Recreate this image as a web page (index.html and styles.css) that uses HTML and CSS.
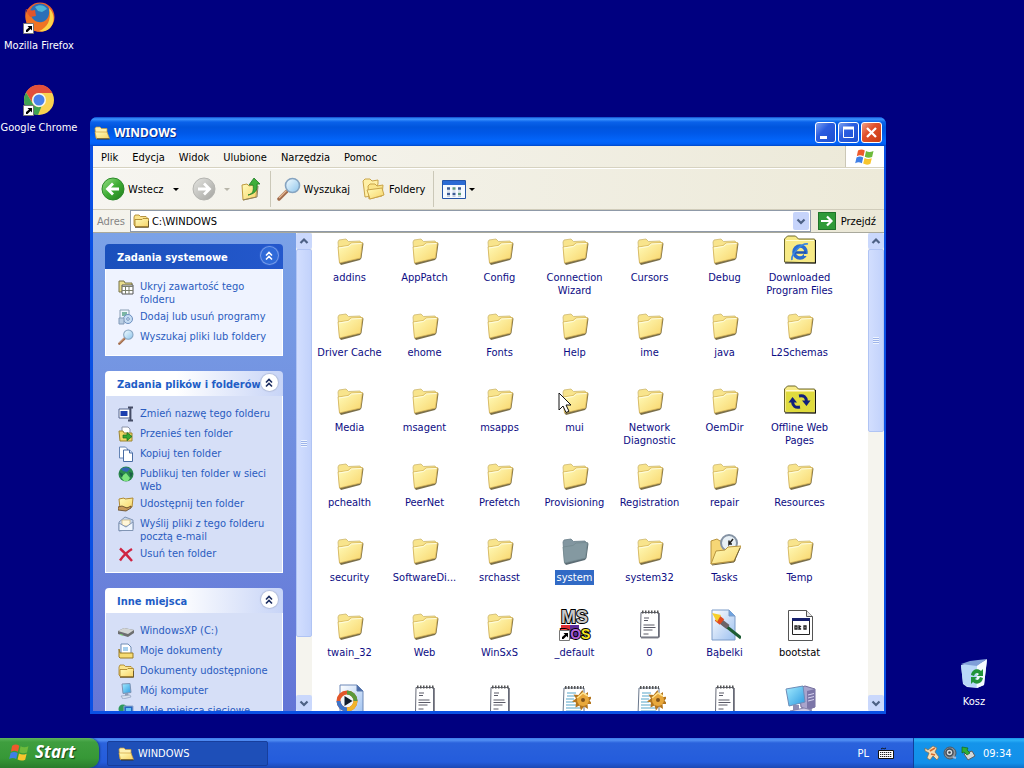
FILE: index.html
```html
<!DOCTYPE html>
<html lang="pl">
<head>
<meta charset="utf-8">
<title>WINDOWS</title>
<link rel="stylesheet" href="styles.css">
</head>
<body>
<svg class="sprite" aria-hidden="true">
  <defs>
    <linearGradient id="gFold" x1="0" y1="0" x2="1" y2="1"><stop offset="0" stop-color="#fffcbc"/><stop offset="1" stop-color="#f8d468"/></linearGradient>
    <linearGradient id="gGreen" x1="0" y1="0" x2="1" y2="1"><stop offset="0" stop-color="#9be08a"/><stop offset=".5" stop-color="#3fae35"/><stop offset="1" stop-color="#1f7a1c"/></linearGradient>
    <linearGradient id="gGrey" x1="0" y1="0" x2="1" y2="1"><stop offset="0" stop-color="#e4e4e0"/><stop offset="1" stop-color="#a4a4a0"/></linearGradient>
    <linearGradient id="gGlass" x1="0" y1="0" x2="1" y2="1"><stop offset="0" stop-color="#f4fcff"/><stop offset="1" stop-color="#8cc4ec"/></linearGradient>
    <linearGradient id="gPage" x1="0" y1="0" x2="1" y2="1"><stop offset="0" stop-color="#ffffff"/><stop offset="1" stop-color="#9cc0f0"/></linearGradient>
    <linearGradient id="gScreen" x1="0" y1="0" x2="1" y2="1"><stop offset="0" stop-color="#a4ecff"/><stop offset="1" stop-color="#2c9ae0"/></linearGradient>
  </defs>
  <symbol id="folder" viewBox="0 0 32 32">
    <path d="M5 28.500 7 31l19-5 1.500-2 2-14.500-2-1-2 15z" fill="#7a6f4a"/>
    <path d="M4 8l1-2 7-1 2.500 2.500L26 7l1.500 2L26 24 5.500 28z" fill="#f8e48c" stroke="#cdb870" stroke-width=".8"/>
    <path d="M4 13l10-1.500 3-2.500 11.500-.500-2 15.500L5.500 29z" fill="url(#gFold)" stroke="#d0ac50" stroke-width=".7"/>
    <path d="M5 14l9.500-1.500 3-2.500 10-.500" fill="none" stroke="#fffde0"/>
  </symbol>
  <symbol id="folder-dim" viewBox="0 0 32 32">
    <path d="M5 28.500 7 31l19-5 1.500-2 2-14.500-2-1-2 15z" fill="#5c6c74"/>
    <path d="M4 8l1-2 7-1 2.500 2.500L26 7l1.500 2L26 24 5.500 28z" fill="#8296a0" stroke="#677c88" stroke-width=".8"/>
    <path d="M4 13l10-1.500 3-2.500 11.500-.500-2 15.500L5.500 29z" fill="#8499a1" stroke="#73898f" stroke-width=".8"/>
  </symbol>
  <symbol id="folder-sm" viewBox="0 0 16 16">
    <path d="M1 4l1-2h4l1.500 1.500H13l1 1V13H2L1 12z" fill="#fbe48c" stroke="#a47c22" stroke-width=".8"/>
    <path d="M2 13.500V6.500h7l1-1h5.500V13.500z" fill="url(#gFold)" stroke="#a47c22" stroke-width=".8"/>
    <path d="M2 14.300h13.500V8" fill="none" stroke="#6d5a2a"/>
  </symbol>
  <symbol id="folder-open" viewBox="0 0 16 16">
    <path d="M1 3.500l1-1.500h4l1.500 1.500H13V13H2z" fill="#fdf0b0" stroke="#c49a3a" stroke-width=".7"/>
    <path d="M2.500 13.500 1 7h12l2.500 6.500z" fill="url(#gFold)" stroke="#d0a13a" stroke-width=".7"/>
    <path d="M3 14h12.500" stroke="#3c3620"/>
  </symbol>
  <symbol id="flat-folder" viewBox="0 0 32 32">
    <path d="M.5 28V5l3-3h8l3 3h16l1 2v22z" fill="#f7ea86" stroke="#6c672c"/>
    <path d="M2 6.500h28" stroke="#fffdd0"/>
    <path d="M1 29h30.500V6" fill="none" stroke="#111" stroke-width="1.200"/>
  </symbol>
  <symbol id="flag" viewBox="0 0 20 18">
    <path d="M3 2.500c2.500-1.500 4.500-1.500 6.800 0L8.500 8.300C6 7 4.200 7 1.800 8.200z" fill="#ee5a2c"/>
    <path d="M11 3c2.500 1.400 4.500 1.300 7.500 0l-1.400 6c-2.600 1-4.800 1-7.300-.3z" fill="#6dba3c"/>
    <path d="M1.500 9.400c2.400-1.200 4.300-1.200 6.700 0L6.900 15.200C4.500 14 2.700 14 .2 15.200z" fill="#3f7fe6"/>
    <path d="M9.500 10c2.500 1.300 4.600 1.300 7.300.2l-1.400 5.600c-2.500 1.200-4.700 1.100-7.200-.2z" fill="#f7c52d"/>
  </symbol>
  <symbol id="note" viewBox="0 0 32 32">
    <path d="M8 4h18v24l-2 1.500H7z" fill="#8a8a92"/>
    <path d="M7 3.500h17.500V28H6.500z" fill="#fff" stroke="#666a78"/>
    <path d="M8 3h17" stroke="#555" stroke-width="3" stroke-dasharray="1.500 1.500"/>
    <path d="M10 9h5M10 11.500h4M9.500 16h11M9.500 18.500h12M9.500 21h9M9.500 25h5" stroke="#5a5a66"/>
  </symbol>
  <symbol id="ini" viewBox="0 0 32 32">
    <path d="M5 4h20v27H4z" fill="#fff" stroke="#69778c"/>
    <path d="M6 3.500h19" stroke="#555" stroke-width="3" stroke-dasharray="1.500 1.500"/>
    <path d="M8 9h9M8 12h8M7 15h8M7 18h8M7 21h11M7 24h15M7 27h15" stroke="#8fc4dc" stroke-width="1.400"/>
    <path d="M23.500 6l1.500 5 4-3 0 5 5-.5-3.500 4 3 3.500-5 0 .5 5-4-2.500-3 4-1.500-5-4 2 .5-5-4-1 4-3-2.500-4 5 .5z" fill="#b4761f"/>
    <circle cx="24" cy="16" r="6" fill="#e8a83c"/>
    <path d="M18 14l6-5 5 3" stroke="#ffe28e" stroke-width="1.500" fill="none"/>
    <circle cx="24" cy="16" r="2" fill="#80521a"/>
  </symbol>
  <symbol id="shortcut" viewBox="0 0 11 11">
    <path d="M.5.500h10v10H.5z" fill="#fff" stroke="#777"/>
    <path d="M3 9V7l3-2.500L4.500 3H9v4.500L7.500 6 4.500 9z" fill="#000"/>
  </symbol>
  <symbol id="chev" viewBox="0 0 16 16">
    <path d="M5 7.500l3-3 3 3M5 11.500l3-3 3 3" fill="none" stroke="currentColor" stroke-width="1.600"/>
  </symbol>
  <symbol id="up" viewBox="0 0 16 16"><path d="M4.500 10 8 6.500l3.500 3.500" fill="none" stroke="#4d6185" stroke-width="2.200"/></symbol>
  <symbol id="down" viewBox="0 0 16 16"><path d="M4.500 6.500 8 10l3.500-3.500" fill="none" stroke="#4d6185" stroke-width="2.200"/></symbol>
  <symbol id="lens" viewBox="0 0 24 24">
    <path d="M10 14 2 22" stroke="#a06a4a" stroke-width="3.500" stroke-linecap="round"/>
    <path d="M9.500 13.500 2 21" stroke="#e4b894" stroke-width="1.200"/>
    <circle cx="15.500" cy="8.500" r="7" fill="url(#gGlass)" stroke="#86a4c0" stroke-width="1.600"/>
  </symbol>
</svg>

<main class="desktop">
  <a class="shortcut firefox" href="#">
    <svg viewBox="0 0 32 32"><circle cx="17" cy="15" r="14.500" fill="#e8622a"/><circle cx="17" cy="12" r="10.500" fill="#2b6fb8"/><path d="M12 5c4-3 10-2 12 2l-5 3-4-1z" fill="#4bb4d8"/><path d="M3 7c0 5 2 6 5 7 2 4 6 7 11 6 5-1 8-6 7-13 6 5 6 14 1 19C20 32 8 31 4 22 2 17 2 11 3 7z" fill="#ef7424"/><path d="M26 6c6 6 6 14 1 20-3 3-7 4-11 3 8-3 13-11 10-23z" fill="#fbd34a"/><path d="M3 7c3 1 6 2 9 1l1 6-6 1z" fill="#e2552a"/><use href="#shortcut" x="0" y="21" width="11" height="11"/></svg>
    <span>Mozilla Firefox</span>
  </a>
  <a class="shortcut chrome" href="#">
    <svg viewBox="0 0 32 32"><circle cx="16" cy="16" r="15" fill="#f9d350"/><path d="M3 8.500A15 15 0 0 1 29.500 9H16a7 7 0 0 0-6.500 10z" fill="#e2503c"/><path d="M3 8.500 10 20a7 7 0 0 0 8.500 2.500L15 31A15 15 0 0 1 3 8.500z" fill="#3fa352"/><circle cx="16" cy="16" r="7" fill="#f5f7f4"/><circle cx="16" cy="16" r="5.500" fill="#4a82ea"/><use href="#shortcut" x="0" y="21" width="11" height="11"/></svg>
    <span>Google Chrome</span>
  </a>
  <a class="shortcut bin" href="#">
    <svg viewBox="0 0 32 32"><path d="M3 7 14 4l6 2 9-4-3 25-7 3-10-1-4-3z" fill="#cfe3f8"/><path d="M3 7l11-1 5 2-1 21-9-1-4-3z" fill="#b9d8f8"/><path d="M3 6 12 3l8-1 9-1-10 7z" fill="#7f9fd8"/><path d="M19 8 29 1l-3 26-7 3z" fill="#f3faff"/><path d="M13 17c1-6 7-7 10-4l2-2v7h-6l2-2c-2-2-4-1-5 2zM25 20c-1 6-7 7-10 4l-2 2v-7h6l-2 2c2 2 4 1 5-2z" fill="#23943a"/></svg>
    <span>Kosz</span>
  </a>

  <section class="window" aria-label="WINDOWS">
    <header class="titlebar">
      <svg class="i16"><use href="#folder-open"/></svg>
      <h1>WINDOWS</h1>
      <button class="wbtn" aria-label="Minimalizuj"><svg viewBox="0 0 19 19"><path d="M4 13h7v3H4z" fill="#fff"/></svg></button>
      <button class="wbtn" aria-label="Maksymalizuj"><svg viewBox="0 0 19 19"><path d="M4.500 5v9.500h10V5z" fill="none" stroke="#fff"/><path d="M4 5h11" stroke="#fff" stroke-width="3"/></svg></button>
      <button class="wbtn close" aria-label="Zamknij"><svg viewBox="0 0 19 19"><path d="M5 5l9 9M14 5l-9 9" stroke="#fff" stroke-width="2.300"/></svg></button>
    </header>
    <div class="frame">
      <div class="menurow">
        <nav class="menu"><button>Plik</button><button>Edycja</button><button>Widok</button><button>Ulubione</button><button>Narzędzia</button><button>Pomoc</button></nav>
        <div class="brand"><svg viewBox="0 0 20 18"><use href="#flag"/></svg></div>
      </div>
      <div class="toolbar">
        <button class="back"><svg class="i24" viewBox="0 0 24 24"><circle cx="12" cy="12" r="11" fill="url(#gGreen)" stroke="#2c8a2a"/><path d="M18 12H7M12 6.500 6.500 12l5.500 5.500" fill="none" stroke="#fff" stroke-width="2.800"/></svg>Wstecz</button>
        <button class="drop" aria-label="Historia wstecz"><i class="tri"></i></button>
        <button class="fwd" aria-label="Dalej"><svg class="i24" viewBox="0 0 24 24"><circle cx="12" cy="12" r="11" fill="url(#gGrey)" stroke="#b4b4b0"/><path d="M6 12h11M12 6.500l5.500 5.500-5.500 5.500" fill="none" stroke="#fff" stroke-width="2.800"/></svg></button>
        <button class="drop" aria-label="Historia dalej"><i class="tri off"></i></button>
        <button class="upbtn" aria-label="W górę"><svg class="i24" viewBox="0 0 24 24"><path d="M4 8l5-1 2 2 8-2-1 13-13 3z" fill="url(#gFold)" stroke="#bf9a3e"/><path d="M5 23l14-3 1-11" fill="none" stroke="#8e8060"/><path d="M10 18c5-1 6-5 5-10h-4l5-7 6 6h-3c1 7-3 10-9 11z" fill="#3fae3a" stroke="#1e7d24" stroke-width=".8"/></svg></button>
        <span class="sep"></span>
        <button class="search"><svg class="i24"><use href="#lens"/></svg>Wyszukaj</button>
        <button class="folders"><svg class="i24" viewBox="0 0 24 24"><path d="M1 4l2-2h5l2 2 6-1v4l-6 12-7 1z" fill="#fff0a6" stroke="#c9a449"/><path d="M6 9l2-2h5l2 2 6-1-1 11-13 3z" fill="#fbe589" stroke="#c9a449"/><path d="M5 13l15-2 2 7-14 4z" fill="url(#gFold)" stroke="#c9a449"/></svg>Foldery</button>
        <span class="sep"></span>
        <button class="views" aria-label="Widoki"><svg class="i24" viewBox="0 0 24 24"><path d="M.5 3.500h23v18H.5z" fill="#f6faff" stroke="#2454a8"/><path d="M1 4h22v4H1z" fill="#2b6bd4"/><path d="M5 11.500h3M16 11.500h3M5 17h3M10.500 17h3" stroke="#3c5c96" stroke-width="2.500"/><path d="M10.500 11.500h3M16 17h3" stroke="#5c9a7c" stroke-width="2.500"/><path d="M5 14h3M16 14h3M10.500 14h3M5 19.500h3M16 19.500h3M10.500 19.500h3" stroke="#c4ccd8"/></svg><i class="tri"></i></button>
      </div>
      <div class="address">
        <label for="path">Adres</label>
        <div class="field"><svg class="i16"><use href="#folder-sm"/></svg><input id="path" type="text" value="C:\WINDOWS" spellcheck="false"><button class="arrow" aria-label="Rozwiń"><svg class="i16"><use href="#down"/></svg></button></div>
        <button class="go"><svg viewBox="0 0 18 18"><path d="M0 0h18v18H0z" fill="#2f9a38"/><path d="M.5.500h17v17H.5z" fill="none" stroke="#1f7228"/><path d="M3 9h10M9 4.500 13.500 9 9 13.500" fill="none" stroke="#fff" stroke-width="2.200"/></svg>Przejdź</button>
      </div>

      <div class="content">
        <aside class="side">
          <section class="panel primary">
            <h2>Zadania systemowe<button aria-label="Zwiń"><svg class="i16"><use href="#chev"/></svg></button></h2>
            <nav>
              <a href="#"><svg class="i16" viewBox="0 0 16 16"><path d="M1 13V2h5l1 2h7v9z" fill="#e9dc8c" stroke="#777348"/><path d="M4 6h11v9H4z" fill="#fff" stroke="#555"/><path d="M4 7.500h11M7.500 8v7M11 8v7M4 11.500h11" stroke="#7a7f6c"/></svg><span>Ukryj zawartość tego folderu</span></a>
              <a href="#"><svg class="i16" viewBox="0 0 16 16"><path d="M2 1h9v11H2z" fill="#eef6fc" stroke="#8a9fb4"/><path d="M4 3h5v4H4z" fill="#7cb6a4"/><circle cx="10" cy="10" r="4.500" fill="#c7ddf3" stroke="#6c8fc0"/><circle cx="10" cy="10" r="1.300" fill="#fff" stroke="#6c8fc0"/><path d="M1 9h5v6H1z" fill="#b8cce2" stroke="#8199b8"/></svg><span>Dodaj lub usuń programy</span></a>
              <a href="#"><svg class="i16"><use href="#lens"/></svg><span>Wyszukaj pliki lub foldery</span></a>
            </nav>
          </section>
          <section class="panel">
            <h2>Zadania plików i folderów<button aria-label="Zwiń"><svg class="i16"><use href="#chev"/></svg></button></h2>
            <nav>
              <a href="#"><svg class="i16" viewBox="0 0 16 16"><path d="M1 3h11v9H1z" fill="#fff" stroke="#55648c"/><path d="M2.500 5h7v5h-7z" fill="#1c3fae"/><path d="M10 1.500h5M12.500 1.500v13M10 14.500h5" stroke="#444c66" stroke-width="1.800" fill="none"/></svg><span>Zmień nazwę tego folderu</span></a>
              <a href="#"><svg class="i16" viewBox="0 0 16 16"><path d="M4 1h6l2 2v6H4z" fill="#fff" stroke="#8b93a8"/><path d="M1 5h4l1 2h8v8H2z" fill="#f1d765" stroke="#9c8432"/><path d="M5 9h4V6.500l5 4-5 4.200V12H5z" fill="#36a532" stroke="#176a1b" stroke-width=".7"/></svg><span>Przenieś ten folder</span></a>
              <a href="#"><svg class="i16" viewBox="0 0 16 16"><path d="M1.500 1h6l2 2v9h-8z" fill="#fff" stroke="#6484b4"/><path d="M5.500 4h6l3 3v8.500h-9z" fill="#fff" stroke="#4a6da4"/><path d="M11.500 4v3h3" fill="#cfe0f8" stroke="#4a6da4"/></svg><span>Kopiuj ten folder</span></a>
              <a href="#"><svg class="i16" viewBox="0 0 16 16"><circle cx="8" cy="8" r="7.500" fill="#2a8a4c"/><path d="M3 3c3-2 7-2 9 0L9 6 5 5z" fill="#3264b4"/><path d="M8 7l4 5-2 3H6l-3-4z" fill="#7ce27c"/><path d="M1 6l4 2-1 4zM11 6l4 1-2 5z" fill="#1c5f46"/></svg><span>Publikuj ten folder w sieci Web</span></a>
              <a href="#"><svg class="i16" viewBox="0 0 16 16"><path d="M1 3l5-1 1 1 8-1-1 9-12 2z" fill="url(#gFold)" stroke="#b08a34"/><path d="M0 11l4-1 5 2 4-2v2l-5 3-8-1z" fill="#c99a5c" stroke="#5d4524" stroke-width=".8"/></svg><span>Udostępnij ten folder</span></a>
              <a href="#"><svg class="i16" viewBox="0 0 16 16"><path d="M1 6l6-5 8 3v9l-14 2z" fill="#c6d6ee" stroke="#8195b4"/><path d="M4 4h8v6H4z" fill="#fff6d8" stroke="#c0ac7a" stroke-width=".7"/><path d="M1 7l7 4 7-5v8.500H1z" fill="#eff5fd" stroke="#8195b4"/></svg><span>Wyślij pliki z tego folderu pocztą e-mail</span></a>
              <a href="#"><svg class="i16" viewBox="0 0 16 16"><path d="M2 2.500C6 6 10 10 14 15M14 3C9 6 5 10 2 14.500" stroke="#cf2442" stroke-width="2.400" fill="none"/></svg><span>Usuń ten folder</span></a>
            </nav>
          </section>
          <section class="panel">
            <h2>Inne miejsca<button aria-label="Zwiń"><svg class="i16"><use href="#chev"/></svg></button></h2>
            <nav>
              <a href="#"><svg class="i16" viewBox="0 0 16 16"><path d="M0 8l6-3 10 2v3l-6 4L0 11z" fill="#6d6f70"/><path d="M0 8l6-3 10 2-6 4z" fill="#d3d5d4"/><path d="M2 11.500l3 .8" stroke="#7fe07a"/></svg><span>WindowsXP (C:)</span></a>
              <a href="#"><svg class="i16" viewBox="0 0 16 16"><path d="M3 1h7l3 3v8H3z" fill="#fff" stroke="#6f8cb4"/><path d="M5 4h5v4H5z" fill="#a6d0ee"/><path d="M1 6l1 4h13v5H2L1 14z" fill="#f6dc74" stroke="#9a7a24"/></svg><span>Moje dokumenty</span></a>
              <a href="#"><svg class="i16"><use href="#folder-sm"/></svg><span>Dokumenty udostępnione</span></a>
              <a href="#"><svg class="i16" viewBox="0 0 16 16"><path d="M4 1l8-.5 1 9-8 1z" fill="url(#gScreen)" stroke="#7d93b4"/><path d="M7 10h3l1 3H7z" fill="#8d9db8"/><path d="M3 13l9-1 1 2-8 2z" fill="#d6dfee" stroke="#8596b4" stroke-width=".6"/></svg><span>Mój komputer</span></a>
              <a href="#"><svg class="i16" viewBox="0 0 16 16"><circle cx="5" cy="6" r="4.500" fill="#2e9a5c"/><path d="M6 3h9v8H6z" fill="#2466c4" stroke="#8fa6cc"/><path d="M8 5h5v3H8z" fill="#66c4f4"/></svg><span>Moje miejsca sieciowe</span></a>
            </nav>
          </section>
        </aside>
        <div class="scroll side-scroll"><button aria-label="W górę"><svg class="i16"><use href="#up"/></svg></button><div class="track"><div class="thumb"><i></i></div></div><button aria-label="W dół"><svg class="i16"><use href="#down"/></svg></button></div>

        <div class="files">
          <a href="#"><svg><use href="#folder"/></svg><span>addins</span></a>
          <a href="#"><svg><use href="#folder"/></svg><span>AppPatch</span></a>
          <a href="#"><svg><use href="#folder"/></svg><span>Config</span></a>
          <a href="#"><svg><use href="#folder"/></svg><span>Connection Wizard</span></a>
          <a href="#"><svg><use href="#folder"/></svg><span>Cursors</span></a>
          <a href="#"><svg><use href="#folder"/></svg><span>Debug</span></a>
          <a href="#"><svg viewBox="0 0 32 32"><use href="#flat-folder"/><circle cx="16" cy="18" r="6" fill="none" stroke="#2a6cd0" stroke-width="3.500"/><path d="M10 18.500h12" stroke="#1f56b4" stroke-width="2.500"/><path d="M20 20h4v2h-4z" fill="#f7ea86"/><path d="M8 26c-1-6 9-17 16-16" fill="none" stroke="#3a86e0" stroke-width="1.700"/></svg><span>Downloaded Program Files</span></a>

          <a href="#"><svg><use href="#folder"/></svg><span>Driver Cache</span></a>
          <a href="#"><svg><use href="#folder"/></svg><span>ehome</span></a>
          <a href="#"><svg><use href="#folder"/></svg><span>Fonts</span></a>
          <a href="#"><svg><use href="#folder"/></svg><span>Help</span></a>
          <a href="#"><svg><use href="#folder"/></svg><span>ime</span></a>
          <a href="#"><svg><use href="#folder"/></svg><span>java</span></a>
          <a href="#"><svg><use href="#folder"/></svg><span>L2Schemas</span></a>

          <a href="#"><svg><use href="#folder"/></svg><span>Media</span></a>
          <a href="#"><svg><use href="#folder"/></svg><span>msagent</span></a>
          <a href="#"><svg><use href="#folder"/></svg><span>msapps</span></a>
          <a href="#"><svg><use href="#folder"/></svg><span>mui</span></a>
          <a href="#"><svg><use href="#folder"/></svg><span>Network Diagnostic</span></a>
          <a href="#"><svg><use href="#folder"/></svg><span>OemDir</span></a>
          <a href="#"><svg viewBox="0 0 32 32"><use href="#flat-folder"/><path d="M2 8h28.500v20H2z" fill="#dfdb3e"/><path d="M15 12c5-1 7 1 7.500 5M16 23c-5 1-7-1-7.500-5" fill="none" stroke="#10207c" stroke-width="3"/><path d="M18 16.500h8.500L22.500 22zM13 18.500H4.500L8.500 13z" fill="#10207c"/></svg><span>Offline Web Pages</span></a>

          <a href="#"><svg><use href="#folder"/></svg><span>pchealth</span></a>
          <a href="#"><svg><use href="#folder"/></svg><span>PeerNet</span></a>
          <a href="#"><svg><use href="#folder"/></svg><span>Prefetch</span></a>
          <a href="#"><svg><use href="#folder"/></svg><span>Provisioning</span></a>
          <a href="#"><svg><use href="#folder"/></svg><span>Registration</span></a>
          <a href="#"><svg><use href="#folder"/></svg><span>repair</span></a>
          <a href="#"><svg><use href="#folder"/></svg><span>Resources</span></a>

          <a href="#"><svg><use href="#folder"/></svg><span>security</span></a>
          <a href="#"><svg><use href="#folder"/></svg><span>SoftwareDi...</span></a>
          <a href="#"><svg><use href="#folder"/></svg><span>srchasst</span></a>
          <a href="#" class="selected"><svg><use href="#folder-dim"/></svg><span>system</span></a>
          <a href="#"><svg><use href="#folder"/></svg><span>system32</span></a>
          <a href="#"><svg viewBox="0 0 32 32"><path d="M2 30V7l6-2 3 2h15v20z" fill="#f6d676" stroke="#b8943e"/><circle cx="20" cy="9" r="8" fill="#e8f0f6" stroke="#8593a4" stroke-width="2"/><path d="M24 5l-4 5v-3.500M20 10h3" stroke="#222" stroke-width="1.500" fill="none"/><path d="M2 30 7 17l9-1 3-3 13-1-7 15z" fill="url(#gFold)" stroke="#b8943e"/><path d="M3 31l22-3 6-14" fill="none" stroke="#6f6440"/></svg><span>Tasks</span></a>
          <a href="#"><svg><use href="#folder"/></svg><span>Temp</span></a>

          <a href="#"><svg><use href="#folder"/></svg><span>twain_32</span></a>
          <a href="#"><svg><use href="#folder"/></svg><span>Web</span></a>
          <a href="#"><svg><use href="#folder"/></svg><span>WinSxS</span></a>
          <a href="#"><svg viewBox="0 0 32 32" class="dos"><text class="dos-top" x="2" y="14" fill="#c8c8c8">MS</text><path d="M2 16h10v14H2z" fill="#e02c34"/><path d="M11 16h9v14h-9z" fill="#5c2c9c"/><text class="dos-low" x="1" y="30"><tspan fill="#f04848">D</tspan><tspan fill="#b060d8">O</tspan><tspan fill="#f8e824">S</tspan></text><use href="#shortcut" x="0" y="21" width="11" height="11"/></svg><span>_default</span></a>
          <a href="#"><svg><use href="#note"/></svg><span>0</span></a>
          <a href="#"><svg viewBox="0 0 32 32"><path d="M3 1h17l6 6v24H3z" fill="url(#gPage)" stroke="#7c9cc8"/><path d="M20 1v6h6" fill="#6fa3e0" stroke="#7c9cc8"/><path d="M13 14l19 15" stroke="#1d5c34" stroke-width="3"/><path d="M10 11l9 7" stroke="#6c6468" stroke-width="5"/><path d="M8 9l5 4" stroke="#e04a20" stroke-width="7"/><path d="M3 4l9 2-4 7z" fill="#f7cf2c"/></svg><span>Bąbelki</span></a>
          <a href="#" class="plain"><svg viewBox="0 0 32 32"><path d="M4.500 1.500h18l6 6v24h-24z" fill="#fff" stroke="#555"/><path d="M22.500 1.500v6h6" fill="#e8e8e8" stroke="#555"/><path d="M8.500 9.500h17v16h-17z" fill="#fff" stroke="#222"/><path d="M8 10.500h18" stroke="#16206c" stroke-width="3"/><path d="M11 17h2v3h-2zM15 16v5M17 17l-2 1.500 2 2M20 17h2v3h-2z" fill="none" stroke="#222" stroke-width="1.300"/></svg><span>bootstat</span></a>

          <a href="#" aria-label="Plik multimedialny"><svg viewBox="0 0 32 32"><path d="M6 1h17l6 6v25H6z" fill="url(#gPage)" stroke="#6d88b8"/><path d="M23 1v6h6" fill="#4b6ca8" stroke="#5a78ac"/><circle cx="13" cy="17" r="8.500" fill="#f2f6f8" stroke="#e2562a" stroke-width="4"/><path d="M13 8.500A8.500 8.500 0 0 1 21.500 17" fill="none" stroke="#5a9a3c" stroke-width="4"/><path d="M21.500 17A8.500 8.500 0 0 1 13 25.500" fill="none" stroke="#f0b42c" stroke-width="4"/><path d="M13 25.500A8.500 8.500 0 0 1 4.500 17" fill="none" stroke="#3c74c8" stroke-width="4"/><path d="M10.500 12l8 5-8 5z" fill="#111c2c"/></svg></a>
          <a href="#" aria-label="Plik tekstowy"><svg><use href="#note"/></svg></a>
          <a href="#" aria-label="Plik tekstowy"><svg><use href="#note"/></svg></a>
          <a href="#" aria-label="Plik konfiguracji"><svg><use href="#ini"/></svg></a>
          <a href="#" aria-label="Plik konfiguracji"><svg><use href="#ini"/></svg></a>
          <a href="#" aria-label="Plik tekstowy"><svg><use href="#note"/></svg></a>
          <a href="#" aria-label="Program"><svg viewBox="0 0 32 32"><path d="M15 4l6-2 10 3v18l-8 3-6-3z" fill="#a9a4cc" stroke="#746e9c"/><path d="M23 7l8-2v18l-8 3z" fill="#7c76a8"/><path d="M24 11l6-1.500M24 14l6-1.500M24 17l6-1.500" stroke="#d8d4f0"/><path d="M2 5l17-3 2 16-16 4z" fill="url(#gScreen)" stroke="#6d8cb8"/><path d="M9 21h6v6H9z" fill="#8d8cb4"/><path d="M6 27l14-3 8 2-12 5z" fill="#cfcce6" stroke="#8784ac"/></svg></a>
        </div>
        <div class="scroll main-scroll"><button aria-label="W górę"><svg class="i16"><use href="#up"/></svg></button><div class="track"><div class="thumb"><i></i></div></div><button aria-label="W dół"><svg class="i16"><use href="#down"/></svg></button></div>
      </div>
    </div>
  </section>
  <svg class="pointer" viewBox="0 0 14 22" aria-hidden="true"><path d="M1 1v17l4-4 3 6.500 3-1.300L8 13h5z" fill="#fff" stroke="#111"/></svg>
</main>

<footer class="taskbar">
  <button class="start"><svg viewBox="0 0 20 18"><use href="#flag"/></svg>Start</button>
  <button class="task"><svg class="i16"><use href="#folder-open"/></svg>WINDOWS</button>
  <div class="lang"><span>PL</span><svg class="i16" viewBox="0 0 16 16"><path d="M3 4c2-2 3 1 5-1" stroke="#111" fill="none"/><path d="M.5 5.500h15v8H.5z" fill="#fff" stroke="#111"/><path d="M2 7.500h12M2 9.500h12M2 11.500h12" stroke="#222" stroke-width="1.200" stroke-dasharray="1.300 .7"/></svg></div>
  <div class="tray">
    <svg class="i16" viewBox="0 0 16 16"><path d="M1 3l3 2 5-4 4 2-2 4 4 5-2 3-4-4-3 4-3-2 2-5-4-2z" fill="#f4dcb4" stroke="#7a6a50" stroke-width=".7"/><path d="M6 6l5-3M7 9l4 1" stroke="#d66a2a" stroke-width="1.600"/></svg>
    <svg class="i16" viewBox="0 0 16 16"><circle cx="8" cy="8" r="6" fill="#8c949a" stroke="#4c5864"/><circle cx="7.500" cy="7.500" r="3.500" fill="#d8dee2" stroke="#424d58" stroke-width="1.500"/><circle cx="7.500" cy="7.500" r="1.300" fill="#384048"/><path d="M11 12l3 1" stroke="#a0b8d8" stroke-width="2"/></svg>
    <svg class="i16" viewBox="0 0 16 16"><path d="M4 9l8-3 3 5-7 4z" fill="#d2d8da" stroke="#596066"/><path d="M2 2l6 1-1 2 3 3-3 2-3-3-2 1z" fill="#2fae34" stroke="#14651c" stroke-width=".7"/></svg>
    <time>09:34</time>
  </div>
</footer>
</body>
</html>
```
FILE: styles.css
```css
* { box-sizing: border-box; }
body {
  margin: 0;
  height: 100vh;
  display: flex;
  flex-direction: column;
  overflow: hidden;
  font: 11px/13px "DejaVu Sans Condensed", "Noto Sans", sans-serif;
  color: #000;
}
button {
  font: inherit;
  color: inherit;
  border: 0;
  padding: 0;
  margin: 0;
  background: none;
  display: flex;
  align-items: center;
}
a { color: inherit; text-decoration: none; }
svg { display: block; flex: none; }
.sprite { position: absolute; width: 0; height: 0; }
.i16 { width: 16px; height: 16px; }
.i24 { width: 24px; height: 24px; }

/* Desktop */
.desktop { flex: 1; position: relative; background: #000080; min-height: 0; }
.shortcut {
  position: absolute;
  width: 78px;
  display: flex;
  flex-direction: column;
  align-items: center;
  gap: 5px;
  color: #fff;
  white-space: nowrap;
}
.shortcut svg { width: 32px; height: 32px; }
.firefox { left: 0; top: 2px; }
.chrome { left: 0; top: 84px; }
.bin { right: 11px; bottom: 30px; }
.pointer { position: absolute; left: 558px; top: 392px; width: 14px; height: 22px; }

/* Window */
.window {
  position: absolute;
  inset: 117px 138px 24px 90px;
  display: flex;
  flex-direction: column;
  background: #0a50e4;
  border-radius: 7px 7px 0 0;
  overflow: hidden;
}
.titlebar {
  height: 29px;
  padding: 2px 4px 0;
  display: flex;
  align-items: center;
  gap: 2px;
  background: linear-gradient(#0a46c8 0, #3d95ff 2px, #0a62ea 5px, #0055dd 10px, #0058e8 16px, #0366fc 24px, #0260f4 27px, #0048c8 29px);
}
.titlebar h1 {
  flex: 1;
  margin: 0 0 0 2px;
  font: bold 12px/16px "Noto Sans", sans-serif;
  color: #fff;
  text-shadow: 1px 1px #0a2c88;
}
.wbtn {
  width: 21px;
  height: 21px;
  border: 1px solid #fff;
  border-radius: 3px;
  background: linear-gradient(135deg, #7ba0f0, #2b5de0 40%, #1d4fd0);
}
.wbtn svg { width: 19px; height: 19px; }
.close { background: linear-gradient(135deg, #f0a088, #e0502c 40%, #c83c14); }
.frame {
  flex: 1;
  min-height: 0;
  margin: 0 2px 3px 3px;
  display: flex;
  flex-direction: column;
  background: #eeebdc;
}

/* Bars */
.menurow { display: flex; height: 22px; background: linear-gradient(90deg, #f8f7f3, #ece9d8); border-bottom: 1px solid #d6d2c0; }
.menu { flex: 1; display: flex; padding: 1px 0 0 8px; gap: 14px; }
.brand { width: 39px; background: #fff; border-left: 1px solid #cbc7b6; display: grid; place-items: center; }
.brand svg { width: 20px; height: 18px; }
.toolbar {
  height: 42px;
  display: flex;
  align-items: center;
  padding-left: 8px;
  border-top: 1px solid #fff;
  border-bottom: 1px solid #d0ccba;
  background: linear-gradient(90deg, #f6f5f0, #edead9);
}
.toolbar button { gap: 3px; }
.toolbar .drop { width: 28px; padding-left: 9px; }
.tri { border: 3px solid transparent; border-top-color: #000; border-bottom: 0; }
.off { border-top-color: #b8b6aa; }
.toolbar .fwd + .drop { width: 22px; padding-left: 8px; }
.sep { width: 1px; height: 36px; background: #cbc8b8; margin: 0 6px 0 8px; }
.search { margin-right: 12px; }
.views { padding-left: 2px; }
.address { height: 22px; display: flex; align-items: stretch; background: linear-gradient(90deg, #f4f3ec, #ebe8d7); }
.address label { padding: 5px 5px 0 4px; color: #858585; }
.field { flex: 1; display: flex; align-items: center; gap: 3px; padding: 0 1px 0 2px; background: #fff; border: 1px solid #8f9aa8; }
.field input { flex: 1; min-width: 0; border: 0; padding: 0; background: none; font: inherit; outline: 0; }
.arrow { height: 18px; background: #c6d4fb; border-radius: 2px; }
.go { padding: 0 8px 0 7px; gap: 5px; }
.go svg { width: 18px; height: 18px; }

/* Content */
.content { flex: 1; min-height: 0; display: flex; background: #fff; border-top: 1px solid #a9a99c; }
.side {
  width: 203px;
  padding: 11px 13px 0 12px;
  overflow: hidden;
  display: flex;
  flex-direction: column;
  gap: 15px;
  background: linear-gradient(#7ba2e7, #6375d6);
}
.panel { flex: none; }
.panel h2 {
  margin: 0;
  height: 25px;
  padding: 2px 5px 0 12px;
  display: flex;
  align-items: center;
  justify-content: space-between;
  white-space: nowrap;
  border-radius: 4px 4px 0 0;
  font: bold 11px/13px "DejaVu Sans Condensed", "Noto Sans", sans-serif;
  color: #215dc6;
  background: linear-gradient(90deg, #fff 40%, #c7d4f7);
}
.panel h2 button {
  flex: none;
  width: 17px;
  height: 17px;
  margin: -4px 0 0 -8px;
  border-radius: 9px;
  background: #fff;
  color: #1a2c60;
  box-shadow: 0 0 1px 1px #b4bfdc;
}
.panel nav {
  display: flex;
  flex-direction: column;
  gap: 4px;
  padding: 10px 12px 10px;
  border: solid #fff;
  border-width: 0 1px 1px;
  background: #d6dff7;
  color: #2a5cc0;
}
.panel nav a { display: flex; gap: 6px; min-height: 16px; margin-right: -8px; }
.panel nav span { padding-top: 1px; margin-bottom: -1px; max-width: 130px; }
.primary h2 { background: linear-gradient(90deg, #1a50bc, #2458cc); color: #fff; }
.primary h2 button { background: #2f6ad8; color: #fff; box-shadow: 0 0 1px 1px #7fa4ee; }
.primary nav { background: #eff3ff; }

.scroll { width: 16px; display: flex; flex-direction: column; background: #f5f4ee; }
.scroll button { height: 16px; background: #cad8fc; border-radius: 2px; }
.track { flex: 1; }
.thumb {
  display: grid;
  place-items: center;
  border: 1px solid #b0c4f4;
  border-radius: 2px;
  background: linear-gradient(90deg, #d2defe, #c2d2fb);
}
.thumb i { width: 6px; height: 7px; background: repeating-linear-gradient(#eef4fe 0 1px, #9db4ea 1px 2px); }
.side-scroll .thumb { height: 87%; }
.main-scroll .thumb { height: 41%; }

.files {
  flex: 1;
  min-width: 0;
  overflow: hidden;
  display: grid;
  grid-template-columns: repeat(auto-fill, 75px);
  grid-auto-rows: 75px;
  padding-top: 1px;
  color: #0c0c84;
}
.files a { display: flex; flex-direction: column; align-items: center; gap: 4px; text-align: center; }
.files svg { width: 32px; height: 32px; }
.files span { padding: 1px 2px; }
.files .plain { color: #000; }
.files .selected span { background: #316ac5; color: #fff; }
.files .dos { overflow: visible; }
.dos text { font: bold 18px/20px "Liberation Sans", sans-serif; stroke: #000; stroke-width: 2px; paint-order: stroke; }
.dos .dos-low { font-size: 14px; }

/* Taskbar */
.taskbar {
  height: 30px;
  display: flex;
  align-items: stretch;
  color: #fff;
  background: linear-gradient(#3c7cec 0, #5390f4 2px, #2a62dc 5px, #245cdc 24px, #1c48b4 30px);
}
.start {
  width: 99px;
  padding: 0 0 2px 9px;
  gap: 5px;
  border-radius: 0 10px 10px 0;
  font: italic bold 17px/20px "Open Sans", sans-serif;
  text-shadow: 1px 1px 1px #14481a;
  background: linear-gradient(#5cb45c 0, #3f9e3f 4px, #379837 20px, #2a7c2c 30px);
  box-shadow: 1px 0 2px #163c8c;
}
.start svg { width: 21px; height: 19px; }
.task {
  width: 161px;
  margin: 3px auto 2px 8px;
  padding-left: 10px;
  gap: 4px;
  border: 1px solid #173e9c;
  border-radius: 2px;
  background: #1e4fb8;
}
.lang { display: flex; align-items: center; gap: 9px; padding-right: 19px; }
.tray {
  width: 111px;
  display: flex;
  align-items: center;
  gap: 2px;
  padding-left: 10px;
  border-left: 1px solid #0f3f9c;
  background: linear-gradient(#1a90e8 0, #2cb0f8 2px, #1494ea 5px, #1290ea 25px, #0f70c8 30px);
}
.tray time { margin-left: 5px; }
```
